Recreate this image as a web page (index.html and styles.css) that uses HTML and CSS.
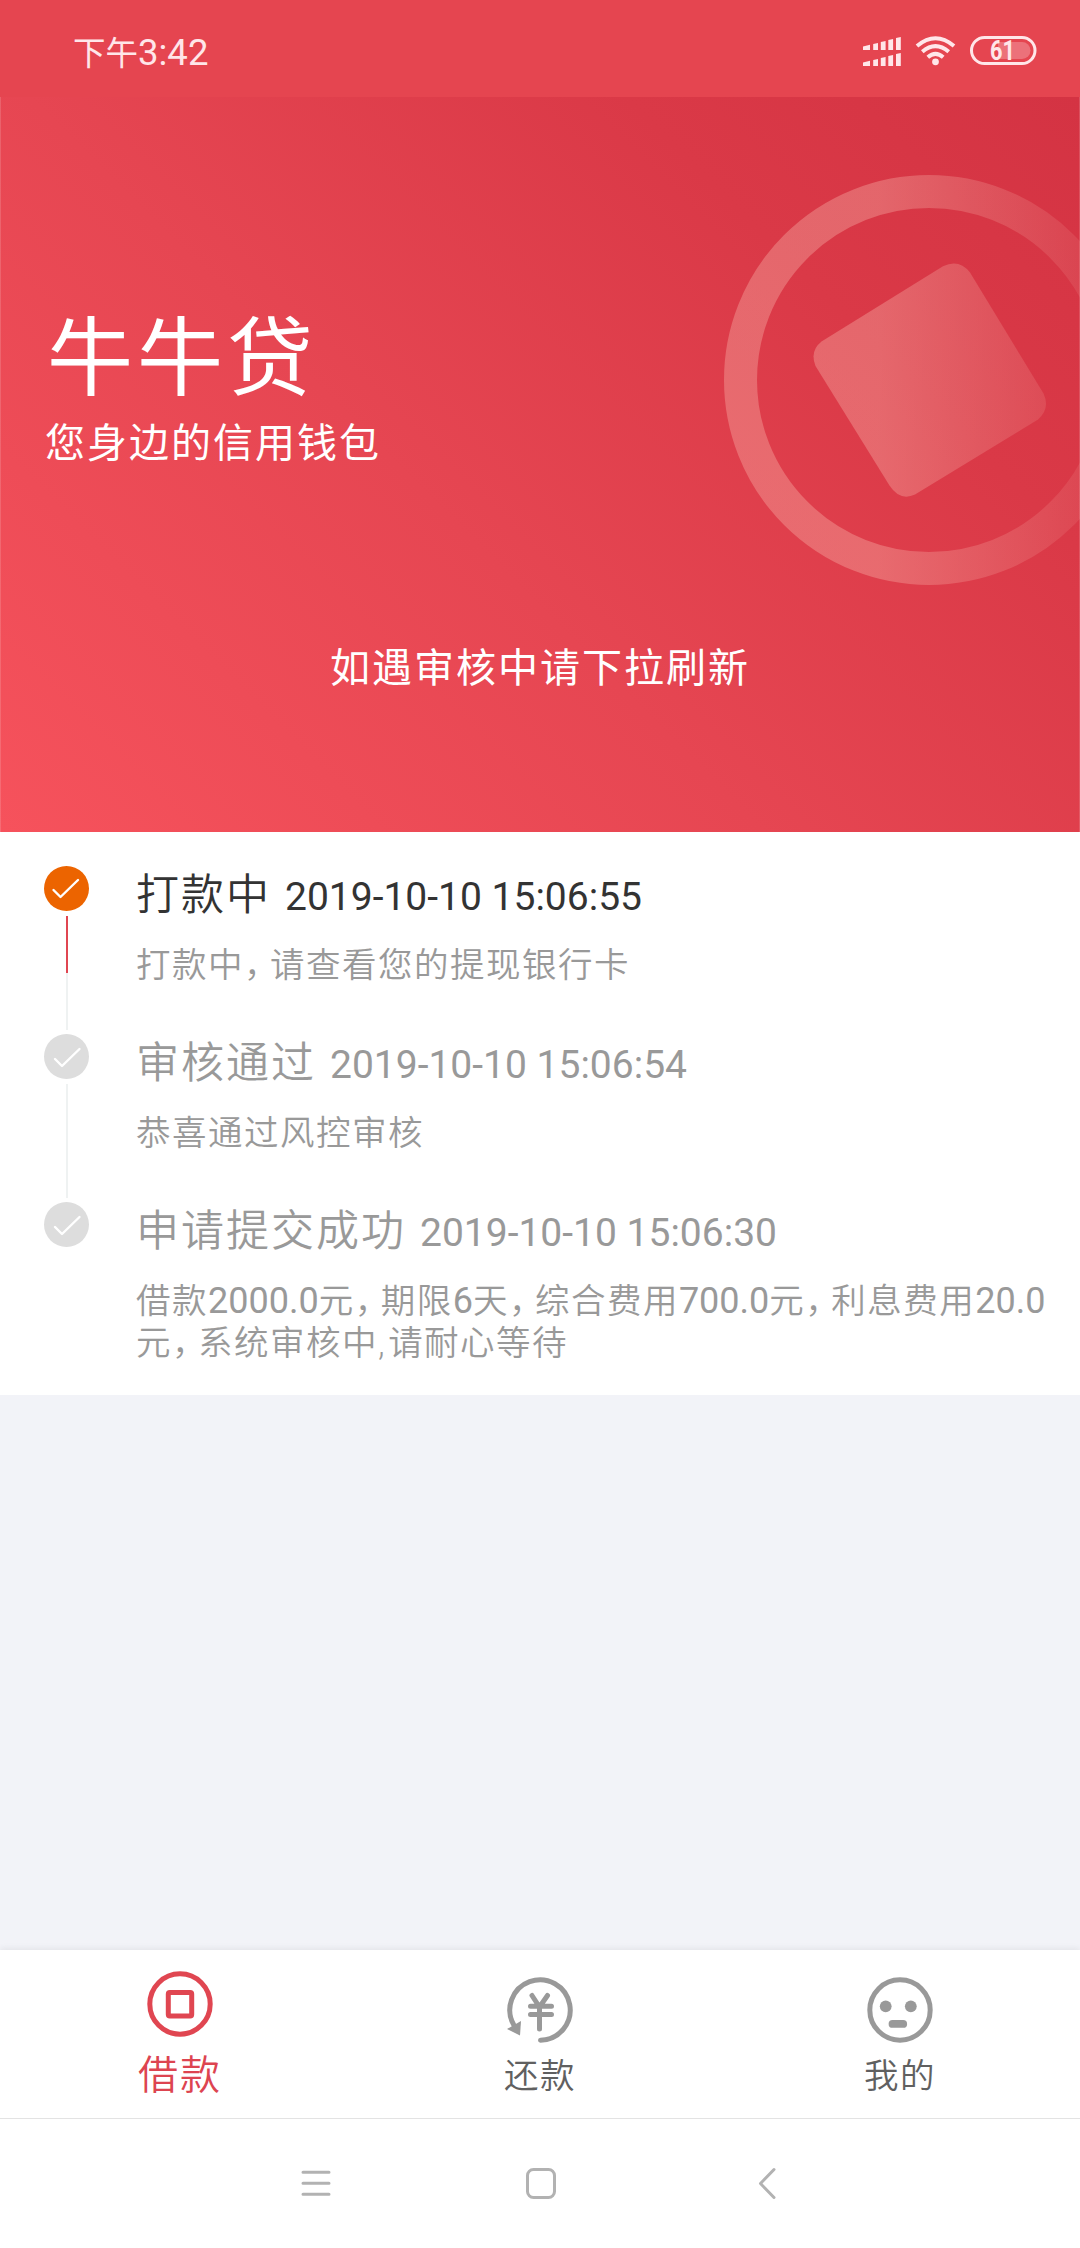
FILE: index.html
```html
<!DOCTYPE html>
<html lang="zh-CN">
<head>
<meta charset="utf-8">
<title>牛牛贷</title>
<link rel="stylesheet" href="styles.css">
</head>
<body>
<div class="screen">
  <header class="status-bar">
    <div class="clock"><span class="clock-period">下午</span>3:42</div>
    <svg class="status-icons" width="176" height="34" viewBox="864 34 176 34">
      <g fill="#ffe6e9">
        <path d="M865 46.600l7-1.800V50h-7zM875.200 44l4.800-1v7h-4.800zM882.800 42l4.800-1v9h-4.800zM890.300 40l4.800-1v11h-4.800zM898 38l4.800-1v13h-4.800z"/>
        <path d="M865 62.600l7-1.800V66h-7zM875.200 60l4.800-1v7h-4.800zM882.800 58l4.800-1v9h-4.800zM890.300 56l4.800-1v11h-4.800zM898 54l4.800-1v13h-4.800z"/>
        <circle cx="937.500" cy="61.800" r="3.400"/>
      </g>
      <g fill="none" stroke="#ffe6e9" stroke-width="4">
        <path d="M919 46Q937.500 30.500 956 46"/>
        <path d="M924.300 51.800Q937.500 40.500 950.700 51.800"/>
        <path d="M929.800 57.300Q937.500 50.500 945.200 57.300"/>
      </g>
      <path d="M1000 42h24a8.500 8.500 0 0 1 0 17h-24z" fill="#ffe6e9" opacity=".28"/>
      <rect x="973.500" y="37.500" width="63.500" height="26" rx="13" fill="none" stroke="#ffe6e9" stroke-width="3"/>
      <text class="battery-level" x="1004.500" y="59.800" text-anchor="middle" textLength="25" lengthAdjust="spacingAndGlyphs">61</text>
    </svg>
  </header>

  <section class="hero">
    <svg class="coin" width="380" height="420" viewBox="700 170 380 420">
      <defs>
        <linearGradient id="coinFade" gradientUnits="userSpaceOnUse" x1="724" y1="0" x2="1110" y2="0">
          <stop offset="0" stop-color="#ffd3c3" stop-opacity=".3"/>
          <stop offset=".4" stop-color="#ffd3c3" stop-opacity=".3"/>
          <stop offset="1" stop-color="#ffd3c3" stop-opacity=".07"/>
        </linearGradient>
      </defs>
      <circle cx="929" cy="380" r="188.500" fill="none" stroke="url(#coinFade)" stroke-width="33"/>
      <path fill="url(#coinFade)" d="M821.500 341.500L943 266.300Q959 258.500 970 272.500L1043.500 393.500Q1050.500 408.500 1038 419.500L915 494.500Q900 501.500 889.500 485.500L815.500 366Q809.500 351 821.500 341.500z"/>
    </svg>
    <h1 class="brand">牛牛贷</h1>
    <p class="slogan">您身边的信用钱包</p>
    <p class="notice">如遇审核中请下拉刷新</p>
  </section>

  <ol class="timeline">
    <li class="step step-active">
      <div class="rail">
        <svg class="dot" viewBox="0 0 45 45"><circle cx="22.500" cy="22.500" r="22.500"/><path d="M9.500 24l7 7L34 14"/></svg>
        <i class="line"></i>
      </div>
      <div class="step-body">
        <h2>打款中<time>2019-10-10 15:06:55</time></h2>
        <p>打款中<span class="comma">，</span>请查看您的提现银行卡</p>
      </div>
    </li>
    <li class="step">
      <div class="rail">
        <svg class="dot" viewBox="0 0 45 45"><circle cx="22.500" cy="22.500" r="22.500"/><path d="M11 25l7 7L35.500 15"/></svg>
        <i class="line"></i>
      </div>
      <div class="step-body">
        <h2>审核通过<time>2019-10-10 15:06:54</time></h2>
        <p>恭喜通过风控审核</p>
      </div>
    </li>
    <li class="step">
      <div class="rail">
        <svg class="dot" viewBox="0 0 45 45"><circle cx="22.500" cy="22.500" r="22.500"/><path d="M11 25l7 7L35.500 15"/></svg>
      </div>
      <div class="step-body">
        <h2>申请提交成功<time>2019-10-10 15:06:30</time></h2>
        <p>借款<span class="num">2000.0</span>元<span class="comma">，</span>期限<span class="num">6</span>天<span class="comma">，</span>综合费用<span class="num">700.0</span>元<span class="comma">，</span>利息费用<span class="num">20.0</span><br>元<span class="comma">，</span>系统审核中<span class="ascii-comma">,</span>请耐心等待</p>
      </div>
    </li>
  </ol>

  <nav class="tabs">
    <a class="tab tab-active">
      <svg width="66" height="66" viewBox="0 0 66 66" fill="none" stroke="#e04651" stroke-width="5"><circle cx="33" cy="33" r="30.200"/><rect x="21.300" y="21.500" width="23.400" height="23.400" rx="1.500"/></svg>
      <span>借款</span>
    </a>
    <a class="tab">
      <svg width="66" height="66" viewBox="0 0 66 66" fill="none" stroke="#999" stroke-width="5" stroke-linecap="round"><path d="M33.500 63.200A30.200 30.200 0 1 0 6.800 48"/><path d="M0 52l14-8-1 14.500z" fill="#999" stroke="none"/><path d="M25 18.500l7.500 11.500L40.500 18.500M32.500 30v22M23.500 29.200h21M23.500 37.500h21"/></svg>
      <span>还款</span>
    </a>
    <a class="tab">
      <svg width="66" height="66" viewBox="0 0 66 66"><circle cx="33" cy="33" r="30.200" fill="none" stroke="#999" stroke-width="5"/><g fill="#999"><circle cx="18.700" cy="29.300" r="5.900"/><circle cx="43.800" cy="29.300" r="5.900"/><rect x="21.600" y="43" width="18.500" height="7.800" rx="3.900"/></g></svg>
      <span>我的</span>
    </a>
  </nav>

  <footer class="system-nav">
    <svg width="30" height="32" viewBox="0 0 30 32"><path d="M2 5.300h26M2 16.300h26M2 27.300h26"/></svg>
    <svg class="home" width="32" height="32" viewBox="0 0 32 32"><rect x="2.500" y="2.500" width="27" height="28" rx="6"/></svg>
    <svg width="20" height="32" viewBox="0 0 20 32"><path d="M17 2.500L3.500 16.500L17 30.500"/></svg>
  </footer>
</div>
</body>
</html>
```

FILE: styles.css
```css
* { box-sizing: border-box; margin: 0; padding: 0; }

body {
  font-family: Roboto, "Noto Sans CJK SC", sans-serif;
  background: #f2f3f8;
}

.screen {
  width: 1080px;
  height: 2248px;
  display: flex;
  flex-direction: column;
  overflow: hidden;
}

.status-bar {
  height: 97px;
  padding: 5px 42px 0 73px;
  display: flex;
  align-items: center;
  justify-content: space-between;
  background: #e54550;
  color: #ffe6e9;
}
.clock { font-size: 36.500px; line-height: 60px; padding-top: 5px; }
.clock-period { font-size: 32.500px; }
.status-icons { display: block; }
.battery-level { font: 700 27px Roboto, sans-serif; fill: #ffe6e9; }

.hero {
  position: relative;
  height: 735px;
  padding-top: 203px;
  background: linear-gradient(45deg, #f6525c 0%, #e64652 42%, #da3947 75%, #d43343 100%);
  box-shadow: inset 1px 0 rgba(255, 255, 255, .15), inset -1px 0 rgba(255, 255, 255, .15);
  color: #fff;
}
.coin { position: absolute; right: 0; top: 73px; }
.brand { padding-left: 47px; font-size: 86px; letter-spacing: 4px; line-height: 120px; font-weight: 400; }
.slogan { padding-left: 45px; font-size: 40px; letter-spacing: 2px; line-height: 60px; margin-top: -6px; }
.notice { margin-top: 165px; font-size: 40px; letter-spacing: 2px; line-height: 60px; text-align: center; }

.timeline {
  height: 563px;
  padding: 34px 30px 0 44px;
  list-style: none;
  background: #fff;
}
.step { display: flex; height: 168px; color: #999; }
.rail { width: 45px; margin-right: 47px; display: flex; flex-direction: column; align-items: center; }
.dot { width: 45px; height: 45px; flex: none; }
.dot circle { fill: #ddd; }
.dot path { fill: none; stroke: #fff; stroke-width: 2.4; stroke-linecap: round; stroke-linejoin: round; }
.line { width: 2px; height: 114px; margin-top: 5px; background: #eff2f2; }
.step-active .dot circle { fill: #ec6400; }
.step-active .line { background: linear-gradient(#e04651 50%, #eff2f2 50%); }
.step-body { margin-top: -1px; }
.step h2 { font-size: 43px; letter-spacing: 2px; line-height: 60px; font-weight: 350; white-space: nowrap; }
.step time { font-family: Roboto, sans-serif; font-size: 39px; letter-spacing: 0; font-weight: 400; margin-left: 14px; }
.step p { margin-top: 17px; font-size: 34.500px; letter-spacing: 1.500px; line-height: 42px; font-weight: 350; white-space: nowrap; }
.step-active h2 { color: #333; }
.num { font-size: 36px; line-height: 1; letter-spacing: 0; font-weight: 400; }
.comma { display: inline-block; width: 26px; letter-spacing: 0; font-feature-settings: "halt"; }
.ascii-comma { margin-right: 2px; }

.tabs {
  height: 169px;
  margin-top: auto;
  display: grid;
  grid-template-columns: repeat(3, 1fr);
  background: #fff;
  border-bottom: 1px solid #e3e3e3;
  box-shadow: 0 -2px 6px rgba(0, 0, 0, .06);
}
.tab {
  display: flex;
  flex-direction: column;
  align-items: center;
  padding-top: 27px;
  font-size: 34.500px;
  letter-spacing: 1.500px;
  line-height: 60px;
  font-weight: 350;
  color: #606060;
}
.tab-active { padding-top: 21px; font-size: 40px; letter-spacing: 2px; color: #dd4450; }
.tab span { margin-top: 3px; }
.tab-active span { margin-top: 9px; }

.system-nav {
  height: 129px;
  padding: 0 303px 2px 301px;
  display: flex;
  align-items: center;
  justify-content: space-between;
  background: #fff;
}
.system-nav svg { fill: none; stroke: #b2b2b2; stroke-width: 3; stroke-linecap: round; stroke-linejoin: round; }
.system-nav .home { margin-right: 7px; }
```
